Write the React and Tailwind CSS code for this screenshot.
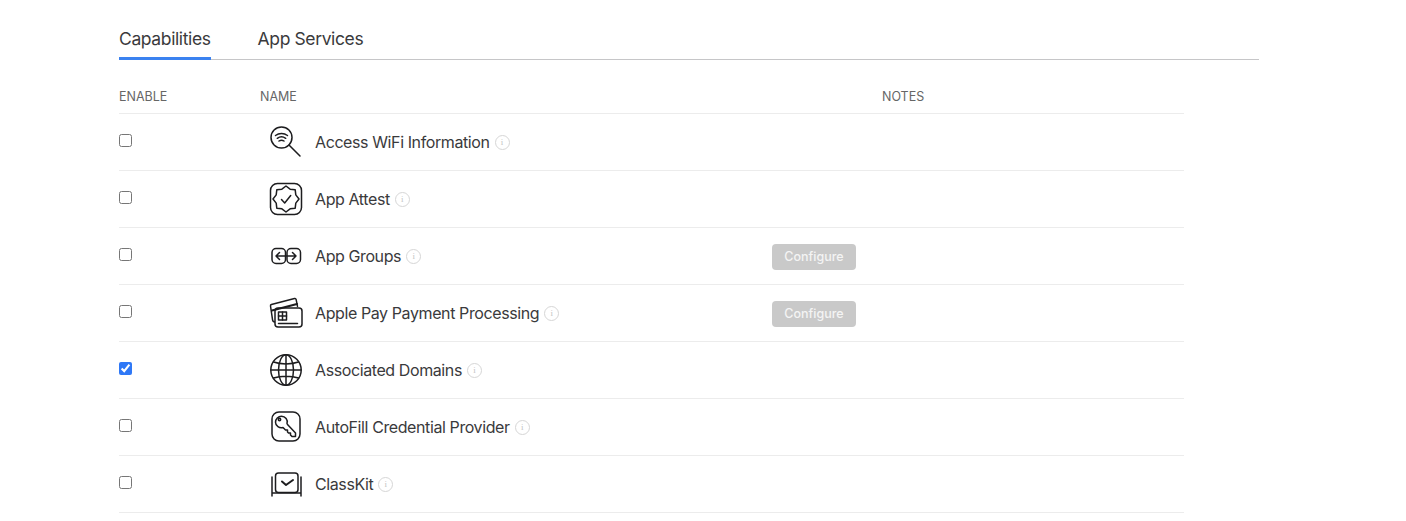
const font = { fontFamily: 'Inter, "Liberation Sans", sans-serif' };

function Svg({ children }) {
  return (
    <svg width="34" height="34" viewBox="0 0 34 34" fill="none" stroke="#1d1d1f" strokeWidth="1.5" strokeLinecap="round" strokeLinejoin="round">
      {children}
    </svg>
  );
}

// 8 pointed badge for App Attest
const badge = Array.from({ length: 16 }, (_, i) => {
  const r = i % 2 === 0 ? 13 : 10.6;
  const a = ((i * 22.5 - 90) * Math.PI) / 180;
  return `${(17 + r * Math.cos(a)).toFixed(1)},${(17 + r * Math.sin(a)).toFixed(1)}`;
}).join(' ');

const WifiIcon = () => (
  <Svg>
    <circle cx="12.500" cy="12.500" r="10.500" />
    <path d="M20 20l11 11" />
    <path d="M6.500 10.500c3.500-2.600 8.500-2.600 12 0M8.300 13.300c2.500-1.800 5.900-1.800 8.400 0M10 16c1.500-1 3.500-1 5 0" />
  </Svg>
);

const AttestIcon = () => (
  <Svg>
    <rect x="1.500" y="1.500" width="31" height="31" rx="7" />
    <polygon points={badge} />
    <path d="M12.500 17.500l3.200 3.500 6-7.500" />
  </Svg>
);

const GroupsIcon = () => (
  <Svg>
    <rect x="3" y="9.500" width="13.500" height="15" rx="4" />
    <rect x="18" y="9.500" width="13.500" height="15" rx="4" />
    <path d="M7 17h20M10.500 13.500L7 17l3.500 3.500M23.500 13.500L27 17l-3.500 3.500" />
  </Svg>
);

const PayIcon = () => (
  <Svg>
    <path d="M5.500 26L4.500 25.500c-.6-.3-.8-.8-.9-1.400L1.500 10c-.1-.7.200-1.300.9-1.500L25.500 2.500c.8-.2 1.400.2 1.600.9l1.400 7" />
    <path d="M3 14.500L28 8" strokeWidth="2.200" />
    <rect x="6" y="12" width="27" height="19" rx="3" />
    <rect x="9.500" y="16" width="8" height="8" />
    <path d="M13.500 16v8M9.500 20h8M9.500 27.500h19" />
  </Svg>
);

const GlobeIcon = () => (
  <Svg>
    <circle cx="17" cy="17" r="15.200" />
    <ellipse cx="17" cy="17" rx="7.500" ry="15.200" />
    <path d="M17 2v30M2 17h30M4.500 9c7 2.500 18 2.500 25 0M4.500 25c7-2.500 18-2.500 25 0" />
  </Svg>
);

const KeyIcon = () => (
  <Svg>
    <rect x="3" y="2" width="28" height="29" rx="7" />
    <path d="M18.500 14.500l8 8.500v3.500h-3.500l-1.500-1.500v-2h-2l-1-1v-2h-2l-2.500-2.500c-3.500 1-7.500-1.500-7.500-5.300 0-3.300 2.700-6 6-6 3.800 0 6.700 3.500 5.500 7.300z" />
    <circle cx="10.500" cy="9.500" r="1.200" />
  </Svg>
);

const ClassKitIcon = () => (
  <Svg>
    <rect x="6.500" y="6" width="22.500" height="19.500" rx="3" />
    <path d="M3 10v19M32 10v19M3 26h29" />
    <path d="M13 14.500l4 3.500 7-5" strokeWidth="2" />
  </Svg>
);

const InfoDot = () => (
  <span className="ml-[5px] flex h-[15px] w-[15px] items-center justify-center rounded-full border border-[#d6d6d6] text-[9px] leading-none text-[#c4c4c4]" style={{ fontFamily: '"Liberation Serif", serif' }}>
    i
  </span>
);

const rows = [
  { name: 'Access WiFi Information', icon: WifiIcon },
  { name: 'App Attest', icon: AttestIcon },
  { name: 'App Groups', icon: GroupsIcon, configure: true },
  { name: 'Apple Pay Payment Processing', icon: PayIcon, configure: true },
  { name: 'Associated Domains', icon: GlobeIcon, checked: true },
  { name: 'AutoFill Credential Provider', icon: KeyIcon },
  { name: 'ClassKit', icon: ClassKitIcon },
];

export default function App() {
  return (
    <div className="h-[521px] overflow-hidden bg-white pl-[119px] pt-[22px] text-[#3a3a3c]" style={font}>
      {/* Tabs */}
      <div className="flex h-[38px] w-[1140px] gap-[47px] border-b border-[#c6c6c8] text-[17.5px] tracking-[-0.38px]">
        <div className="h-[38px] border-b-[3px] border-[#3b82f0] pt-1 leading-[26px]">Capabilities</div>
        <div className="pt-1 leading-[26px]">App Services</div>
      </div>

      <div className="w-[1065px]">
        {/* Header */}
        <div className="flex h-[54px] items-end border-b border-[#ececec] pb-2 text-[12.5px] leading-4 text-[#666666]">
          <div className="w-[141px]">ENABLE</div>
          <div className="w-[622px]">NAME</div>
          <div>NOTES</div>
        </div>

        {rows.map((row) => {
          const Icon = row.icon;
          return (
            <div key={row.name} className="flex h-[57px] items-center border-b border-[#ececec]">
              <div className="flex w-[141px] items-center">
                <input type="checkbox" defaultChecked={row.checked} className="m-0 -mt-1 h-[13px] w-[13px] accent-[#2f78f6]" />
              </div>
              <div className="flex w-[512px] items-center">
                <div className="flex w-[52px] pl-[9px]">
                  <Icon />
                </div>
                <span className="ml-[3px] text-[16px] tracking-[-0.4px]">{row.name}</span>
                <InfoDot />
              </div>
              {row.configure && (
                <div className="mt-0.5 flex h-[26px] w-[84px] items-center justify-center rounded bg-[#c9c9c9] text-[12.500px] font-medium text-[#f4f4f4]">
                  Configure
                </div>
              )}
            </div>
          );
        })}
      </div>
    </div>
  );
}
